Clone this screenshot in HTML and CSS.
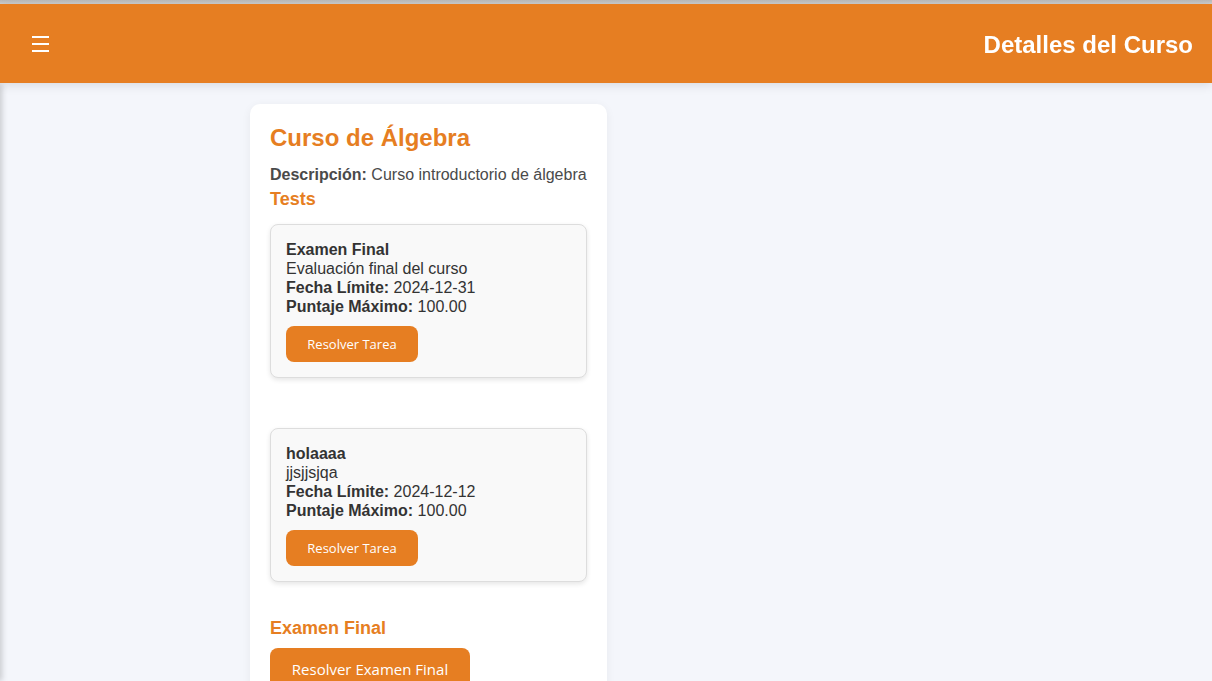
FILE: index.html
```html
<!DOCTYPE html>
<html lang="es">
<head>
<meta charset="utf-8">
<title>Detalles del Curso</title>
<link rel="stylesheet" href="styles.css">
</head>
<body>
<div class="topline"></div>
<header class="header">
  <button class="menu-btn" aria-label="Menú">
    <svg width="17" height="16" viewBox="0 0 17 16"><rect x="0" y="0" width="17" height="2" fill="#fff"/><rect x="0" y="7" width="17" height="2" fill="#fff"/><rect x="0" y="14" width="17" height="2" fill="#fff"/></svg>
  </button>
  <h1 class="header-title">Detalles del Curso</h1>
</header>
<aside class="sidebar"></aside>
<main class="main">
  <section class="course-card">
    <h2 class="course-title">Curso de Álgebra</h2>
    <p class="course-desc"><strong>Descripción:</strong> Curso introductorio de álgebra</p>
    <h3 class="section-title">Tests</h3>
    <div class="test-card">
      <div class="test-line"><strong>Examen Final</strong></div>
      <div class="test-line">Evaluación final del curso</div>
      <div class="test-line"><strong>Fecha Límite:</strong> 2024-12-31</div>
      <div class="test-line"><strong>Puntaje Máximo:</strong> 100.00</div>
      <button class="btn">Resolver Tarea</button>
    </div>
    <div class="test-card">
      <div class="test-line"><strong>holaaaa</strong></div>
      <div class="test-line">jjsjjsjqa</div>
      <div class="test-line"><strong>Fecha Límite:</strong> 2024-12-12</div>
      <div class="test-line"><strong>Puntaje Máximo:</strong> 100.00</div>
      <button class="btn">Resolver Tarea</button>
    </div>
    <h3 class="section-title exam-title">Examen Final</h3>
    <button class="btn btn-large">Resolver Examen Final</button>
  </section>
</main>
</body>
</html>
```
FILE: styles.css
```css
* { box-sizing: border-box; }
html, body { margin: 0; padding: 0; }
body {
  background: #f4f6fb;
  font-family: "Liberation Sans", Arial, sans-serif;
  color: #333;
  overflow: hidden;
  height: 681px;
}
.topline {
  height: 4px;
  background: linear-gradient(#b9b9b9, #cfcfcf);
}
.header {
  height: 79px;
  background: #e67e22;
  display: flex;
  align-items: center;
  justify-content: space-between;
  padding: 2px 19px 0 32px;
  box-shadow: 0 2px 10px rgba(0,0,0,0.12);
  position: relative;
  z-index: 2;
}
.menu-btn {
  background: none;
  border: 0;
  padding: 0;
  margin: 0;
  display: flex;
  margin-top: -1px;
}
.header-title {
  margin: 0;
  color: #fff;
  font-size: 24px;
  font-weight: bold;
  line-height: 28px;
}
.sidebar {
  position: fixed;
  top: 83px;
  left: -250px;
  width: 250px;
  bottom: 0;
  background: #fff;
  box-shadow: 2px 0 6px rgba(0,0,0,0.18);
}
.main {
  padding: 21px 20px 20px 250px;
}
.course-card {
  width: 357px;
  background: #fff;
  border-radius: 10px;
  padding: 20px;
  box-shadow: 0 2px 10px rgba(0,0,0,0.06);
}
.course-title {
  margin: 0;
  color: #e67e22;
  font-size: 24px;
  line-height: 28px;
  font-weight: bold;
}
.course-desc {
  margin: 13px 0 0;
  font-size: 16px;
  line-height: 19px;
  color: #4a4a4a;
  white-space: nowrap;
}
.course-desc strong { color: #4a4a4a; }
.section-title {
  margin: 5px 0 0;
  color: #e67e22;
  font-size: 18px;
  line-height: 21px;
  font-weight: bold;
}
.test-card {
  margin-top: 14px;
  background: #f9f9f9;
  border: 1px solid #dddddd;
  border-radius: 8px;
  padding: 15px;
  box-shadow: 0 2px 5px rgba(0,0,0,0.1);
}
.test-card + .test-card { margin-top: 50px; }
.test-line {
  font-size: 16px;
  line-height: 19px;
  color: #333;
}
.btn {
  display: block;
  margin-top: 10px;
  background: #e67e22;
  color: #fff;
  border: 0;
  border-radius: 8px;
  padding: 10px 0;
  width: 132px;
  text-align: center;
  font-family: "Open Sans", "Noto Sans", sans-serif;
  font-size: 13px;
  line-height: 16px;
  height: 36px;
}
.exam-title { margin-top: 36px; }
.btn-large {
  margin-top: 9px;
  font-size: 15px;
  line-height: 18px;
  padding: 12px 0;
  height: 42px;
  width: 200px;
}
```
